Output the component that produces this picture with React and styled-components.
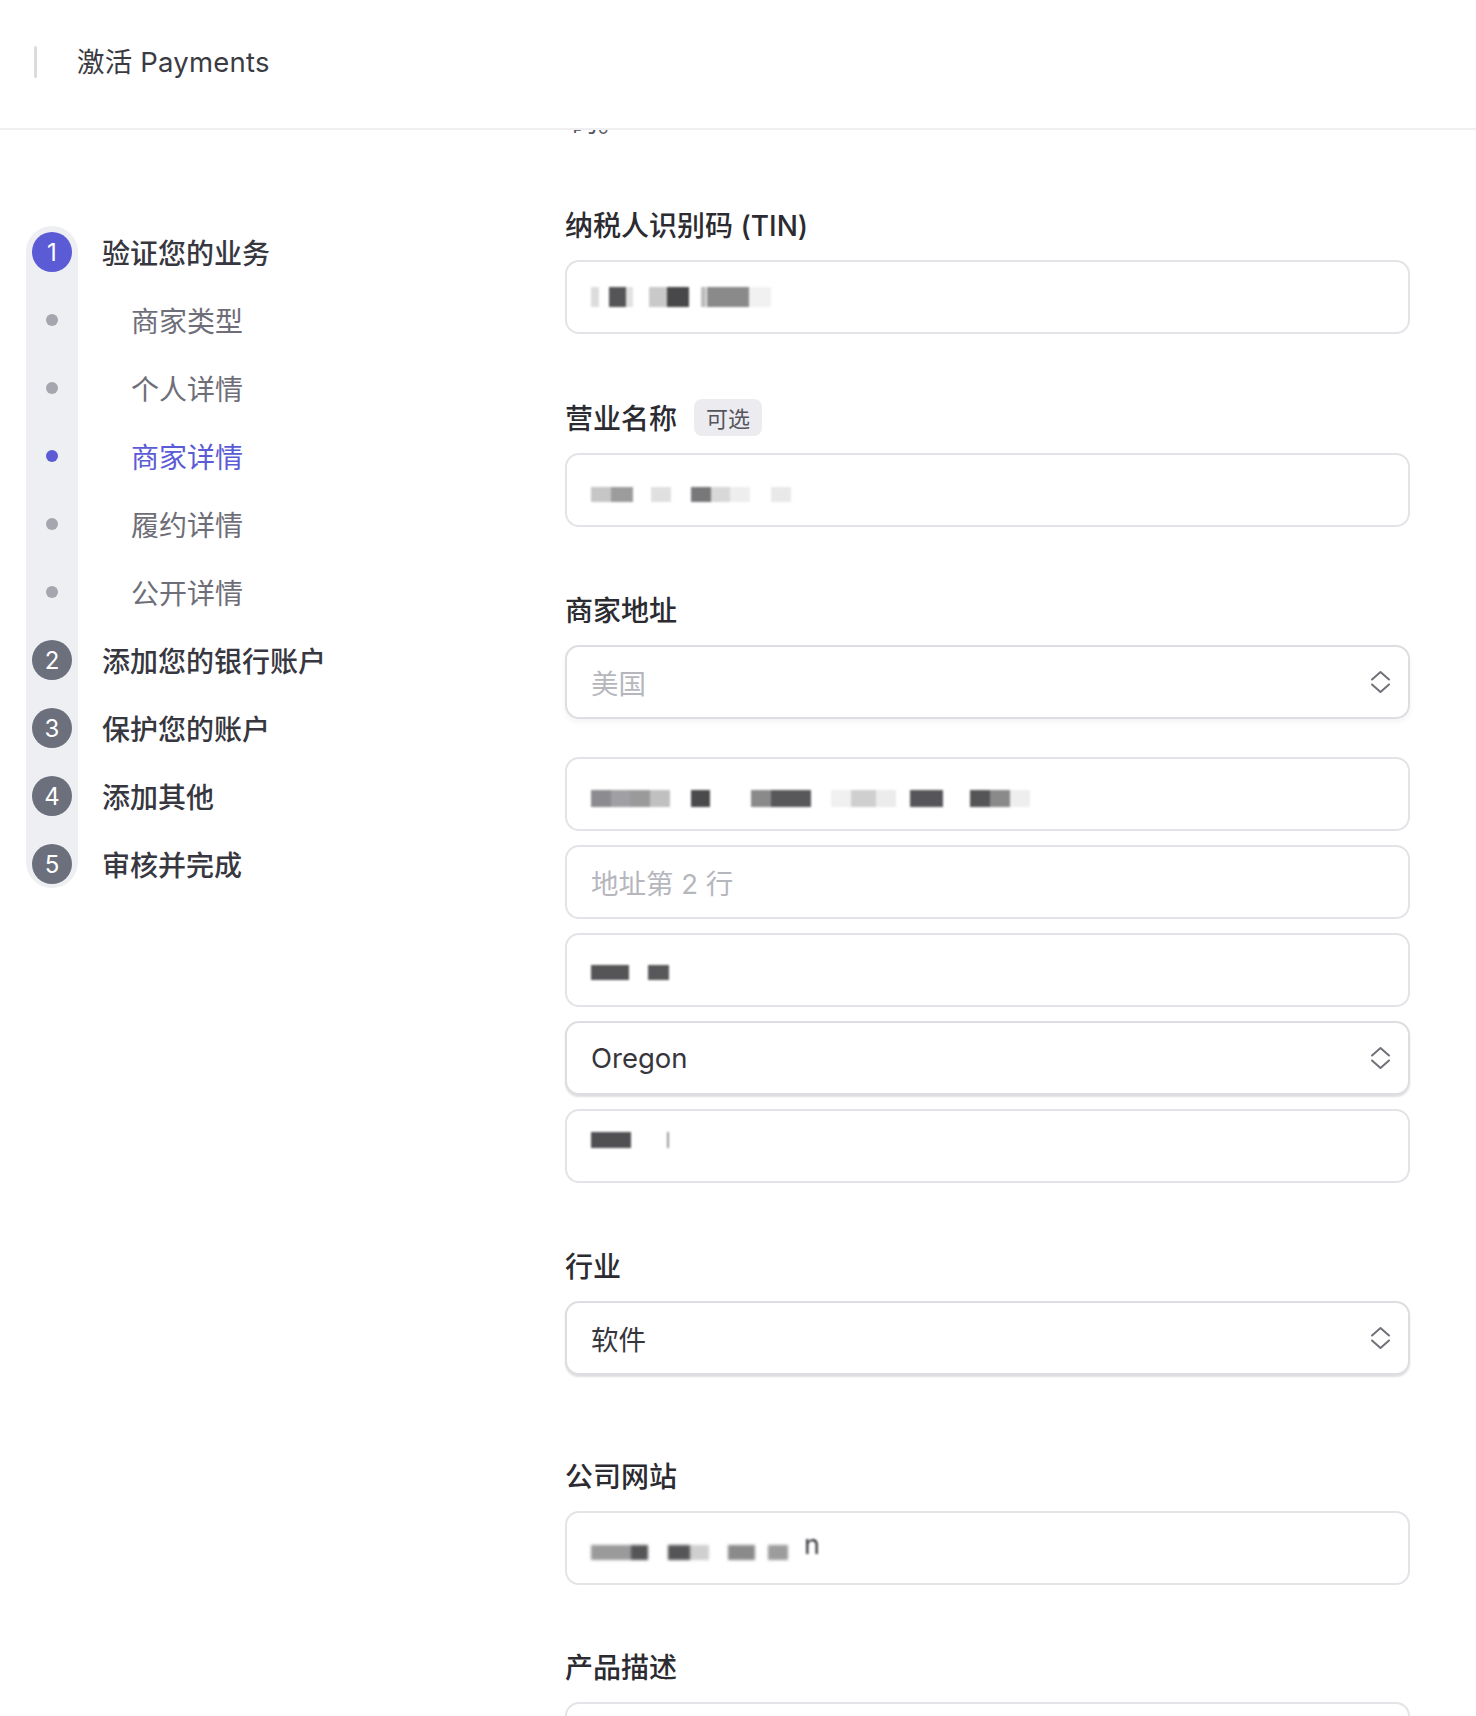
import styled, { createGlobalStyle } from "styled-components";

const GlobalStyle = createGlobalStyle`
  * { box-sizing: border-box; }
  body {
    margin: 0;
    background: #ffffff;
    font-family: "Inter", "Noto Sans CJK SC", sans-serif;
    color: #2f2f35;
  }
`;

const Page = styled.div`
  width: 1476px;
  min-height: 1716px;
  overflow: hidden;
`;

const Header = styled.header`
  height: 130px;
  display: flex;
  align-items: center;
  padding: 0 0 8px 34px;
  border-bottom: 2px solid #efeff2;
`;

const HeaderBar = styled.span`
  width: 3px;
  height: 32px;
  margin-top: 4px;
  background: #dcdce0;
  border-radius: 2px;
`;

const Title = styled.h1`
  margin: 0 0 0 40px;
  font-size: 27.5px;
  font-weight: 400;
  color: #3b3b43;
  letter-spacing: 0.2px;
`;

const Main = styled.main`
  display: grid;
  grid-template-columns: 565px 845px;
`;

const Sidebar = styled.nav`
  padding: 88px 0 0 26px;
`;

const Steps = styled.div`
  display: grid;
  grid-template-columns: 52px auto;
  grid-auto-rows: 68px;
  column-gap: 24px;
`;

const Rail = styled.div`
  grid-column: 1;
  margin: 8px 0 10px;
  background: #eeeff3;
  border-radius: 26px;
`;

const Marker = styled.div`
  grid-column: 1;
  display: flex;
  align-items: center;
  justify-content: center;
`;

const Circle = styled.span`
  width: 40px;
  height: 40px;
  border-radius: 50%;
  display: flex;
  align-items: center;
  justify-content: center;
  background: ${(p) => (p.$active ? "#5b5bd6" : "#6c6f7c")};
  color: #ffffff;
  font-size: 24px;
  font-weight: 400;
`;

const Dot = styled.span`
  width: 12px;
  height: 12px;
  border-radius: 50%;
  background: ${(p) => (p.$active ? "#5b5bd6" : "#a6a6ae")};
`;

const StepLabel = styled.div`
  grid-column: 2;
  display: flex;
  align-items: center;
  padding-left: ${(p) => (p.$sub ? "29px" : "0")};
  font-size: 28px;
  font-weight: ${(p) => (p.$sub ? 400 : 500)};
  color: ${(p) => (p.$active ? "#5b5bd6" : p.$sub ? "#6e6e78" : "#37373f")};
  white-space: nowrap;
`;

const Form = styled.section`
  display: flex;
  flex-direction: column;
`;

const Clip = styled.div`
  height: 6px;
  overflow: hidden;
  padding-left: 6px;
`;

const ClipText = styled.div`
  margin-top: -25px;
  font-size: 27px;
  line-height: 36px;
  color: #55555c;
`;

const Field = styled.div`
  display: flex;
  flex-direction: column;
  margin-top: ${(p) => p.$top}px;
`;

const Label = styled.div`
  height: 36px;
  display: flex;
  align-items: center;
  gap: 17px;
  margin-bottom: 18px;
  font-size: 28px;
  font-weight: 500;
  color: #2b2b31;
`;

const Badge = styled.span`
  height: 37px;
  padding: 0 12px;
  display: flex;
  align-items: center;
  background: #ececf0;
  border-radius: 8px;
  font-size: 22px;
  font-weight: 400;
  color: #55555d;
`;

const Stack = styled.div`
  display: flex;
  flex-direction: column;
  gap: 14px;
`;

const Box = styled.div`
  height: 74px;
  display: flex;
  align-items: center;
  justify-content: space-between;
  padding: 0 17px 0 24px;
  border: 2px solid ${(p) => (p.$select ? "#dedee2" : "#e4e4e8")};
  border-radius: 14px;
  background: #ffffff;
  box-shadow: ${(p) =>
    p.$select === "soft"
      ? "0 3px 6px rgba(0, 0, 0, 0.05)"
      : p.$select
      ? "0 2px 2px rgba(0, 0, 0, 0.13)"
      : "none"};
  margin-bottom: ${(p) => p.$after || 0}px;
  font-size: 27.5px;
  color: ${(p) => (p.$placeholder ? "#b6b6bd" : "#36363c")};
`;

const TallBox = styled(Box)`
  height: 120px;
`;

const Mosaic = styled.span`
  display: flex;
  align-items: center;
  filter: blur(1px);
  transform: translateY(${(p) => p.$shift || 0}px);
`;

const Block = styled.span`
  display: block;
  width: ${(p) => p.$w}px;
  height: ${(p) => p.$h || 17}px;
  margin-left: ${(p) => p.$gap}px;
  background: ${(p) => p.$c};
`;

const Tail = styled.span`
  margin-left: 16px;
  font-size: 27px;
  color: #3a3a40;
  transform: translateY(-4px);
`;

function Chevrons() {
  return (
    <svg width="21" height="24" viewBox="0 0 21 24" fill="none" stroke="#707078" strokeWidth="2" strokeLinecap="round" strokeLinejoin="round">
      <path d="M2 9.5 L10.5 2 L19 9.5" />
      <path d="M2 14.5 L10.5 22 L19 14.5" />
    </svg>
  );
}

function Redacted({ blocks, shift, h }) {
  return (
    <Mosaic $shift={shift}>
      {blocks.map(([gap, w, c], i) => (
        <Block key={i} $gap={gap} $w={w} $c={c} $h={h} />
      ))}
    </Mosaic>
  );
}

const steps = [
  { n: 1, label: "验证您的业务", active: true },
  { sub: true, label: "商家类型" },
  { sub: true, label: "个人详情" },
  { sub: true, label: "商家详情", active: true },
  { sub: true, label: "履约详情" },
  { sub: true, label: "公开详情" },
  { n: 2, label: "添加您的银行账户" },
  { n: 3, label: "保护您的账户" },
  { n: 4, label: "添加其他" },
  { n: 5, label: "审核并完成" },
];

const tin = [
  [0, 8, "#dcdcdc"],
  [10, 17, "#555558"],
  [0, 7, "#e2e2e2"],
  [16, 18, "#c9c9c9"],
  [0, 22, "#48484b"],
  [12, 5, "#bdbdbd"],
  [1, 42, "#8a8a8a"],
  [0, 22, "#f1f1f1"],
];

const businessName = [
  [0, 20, "#c6c6c6"],
  [0, 22, "#9c9c9c"],
  [18, 20, "#e0e0e0"],
  [20, 20, "#78787a"],
  [0, 19, "#d8d8d8"],
  [0, 20, "#eeeeee"],
  [21, 20, "#e9e9e9"],
];

const address = [
  [0, 20, "#8c8c90"],
  [0, 19, "#a0a0a4"],
  [0, 20, "#9a9a9a"],
  [0, 20, "#c0c0c0"],
  [21, 19, "#4a4a4d"],
  [41, 20, "#8a8a8a"],
  [0, 40, "#58585b"],
  [20, 20, "#f0f0f0"],
  [0, 25, "#cfcfcf"],
  [0, 20, "#ececec"],
  [14, 33, "#56565a"],
  [27, 20, "#555558"],
  [0, 20, "#8a8a8a"],
  [0, 20, "#eeeeee"],
];

const city = [
  [0, 38, "#555558"],
  [19, 21, "#58585b"],
];

const zip = [
  [0, 40, "#505053"],
  [36, 2, "#999999"],
];

const website = [
  [0, 40, "#9a9a9a"],
  [0, 17, "#555558"],
  [20, 22, "#555558"],
  [0, 19, "#cfcfcf"],
  [19, 27, "#8a8a8a"],
  [13, 20, "#9c9c9c"],
];

export default function App() {
  return (
    <Page>
      <GlobalStyle />
      <Header>
        <HeaderBar />
        <Title>激活 Payments</Title>
      </Header>

      <Main>
        <Sidebar>
          <Steps>
            <Rail style={{ gridRow: `1 / ${steps.length + 1}` }} />
            {steps.map((s, i) => (
              <Row key={i} step={s} row={i + 1} />
            ))}
          </Steps>
        </Sidebar>

        <Form>
          <Clip>
            <ClipText>码。</ClipText>
          </Clip>

          <Field $top={70}>
            <Label>纳税人识别码 (TIN)</Label>
            <Box>
              <Redacted blocks={tin} h={20} />
            </Box>
          </Field>

          <Field $top={65}>
            <Label>
              营业名称
              <Badge>可选</Badge>
            </Label>
            <Box>
              <Redacted blocks={businessName} h={15} shift={4} />
            </Box>
          </Field>

          <Field $top={64}>
            <Label>商家地址</Label>
            <Box $select="soft" $placeholder $after={38}>
              美国
              <Chevrons />
            </Box>
            <Stack>
              <Box>
                <Redacted blocks={address} shift={4} />
              </Box>
              <Box $placeholder>地址第 2 行</Box>
              <Box>
                <Redacted blocks={city} h={15} shift={2} />
              </Box>
              <Box $select>
                Oregon
                <Chevrons />
              </Box>
              <Box>
                <Redacted blocks={zip} h={16} shift={-6} />
              </Box>
            </Stack>
          </Field>

          <Field $top={64}>
            <Label>行业</Label>
            <Box $select>
              软件
              <Chevrons />
            </Box>
          </Field>

          <Field $top={82}>
            <Label>公司网站</Label>
            <Box>
              <Mosaic>
                <Redacted blocks={website} h={15} shift={4} />
                <Tail>n</Tail>
              </Mosaic>
            </Box>
          </Field>

          <Field $top={63}>
            <Label>产品描述</Label>
            <TallBox />
          </Field>
        </Form>
      </Main>
    </Page>
  );
}

function Row({ step, row }) {
  return (
    <>
      <Marker style={{ gridRow: row }}>
        {step.sub ? <Dot $active={step.active} /> : <Circle $active={step.active}>{step.n}</Circle>}
      </Marker>
      <StepLabel style={{ gridRow: row }} $sub={step.sub} $active={step.active && step.sub}>
        {step.label}
      </StepLabel>
    </>
  );
}
